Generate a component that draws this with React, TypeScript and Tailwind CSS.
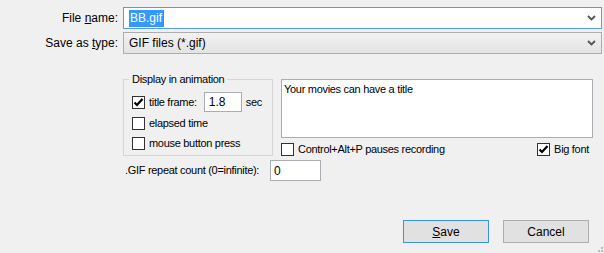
import React from 'react';

const Check = ({ checked }: { checked?: boolean }) => (
  <span className="w-[13px] h-[13px] border border-[#333333] bg-white flex items-center justify-center shrink-0">
    {checked && (
      <svg width="11" height="11" viewBox="0 0 11 11">
        <path d="M1.5 5.5 L4 8 L9.5 2" fill="none" stroke="#000" strokeWidth="2.2" />
      </svg>
    )}
  </span>
);

const Chevron = () => (
  <svg width="9" height="6" viewBox="0 0 9 6" className="shrink-0">
    <path d="M1 1 L4.5 4.5 L8 1" fill="none" stroke="#555555" strokeWidth="1.8" />
  </svg>
);

const App = () => {
  return (
    <div className="relative w-[604px] h-[253px] bg-[#f0f0f0] text-black flex flex-col font-['Liberation_Sans',Arial,sans-serif] overflow-hidden">
      <div className="flex items-center mt-[7px] h-[22px]">
        <label className="w-[118px] text-right text-[12px] mr-[5px]">
          File <span className="underline">n</span>ame:
        </label>
        <div className="w-[479px] h-[22px] border border-[#569de5] bg-white flex items-center pl-[5px] pr-[5px] text-[12px]">
          <span className="bg-[#3399ff] text-white h-[17px] leading-[17px] px-[1px]">BB.gif</span>
          <span className="w-[1px] h-[17px] bg-[#d46a00]" />
          <div className="flex-1" />
          <Chevron />
        </div>
      </div>

      <div className="flex items-center mt-[3px] h-[22px]">
        <label className="w-[118px] text-right text-[12px] mr-[5px]">
          Save as <span className="underline">t</span>ype:
        </label>
        <div className="w-[479px] h-[22px] border border-[#adadad] bg-gradient-to-b from-[#f2f2f2] to-[#e3e3e3] flex items-center pl-[5px] pr-[5px] text-[12px]">
          <span>GIF files (*.gif)</span>
          <div className="flex-1" />
          <Chevron />
        </div>
      </div>

      <div className="flex ml-[123px] mt-[19px] text-[11px] tracking-[-0.3px]">
        <fieldset className="w-[150px] h-[83px] border border-[#d5d5d5] pl-[5px]">
          <legend className="px-[3px] leading-[13px]">Display in animation</legend>
          <div className="pl-[3px]">
            <div className="flex items-center h-[20px] mt-[6px]">
              <Check checked />
              <span className="ml-[4px]">title frame:</span>
              <div className="ml-[7px] w-[38px] h-[20px] border border-[#abadb3] bg-white flex items-center pl-[4px] text-[12px] tracking-normal">
                1.8
              </div>
              <span className="ml-[4px]">sec</span>
            </div>
            <div className="flex items-center h-[19px] mt-[2px]">
              <Check />
              <span className="ml-[4px]">elapsed time</span>
            </div>
            <div className="flex items-center h-[20px]">
              <Check />
              <span className="ml-[4px]">mouse button press</span>
            </div>
          </div>
        </fieldset>

        <div className="ml-[8px] mt-[6px] w-[312px] flex flex-col">
          <textarea
            readOnly
            defaultValue="Your movies can have a title"
            className="h-[59px] w-full border border-[#abadb3] bg-white resize-none px-[2px] pt-[1px] text-[11px] tracking-[-0.3px] outline-none font-['Liberation_Sans',Arial,sans-serif]"
          />
          <div className="flex items-center justify-between h-[15px] mt-[4px] pr-[4px]">
            <div className="flex items-center">
              <Check />
              <span className="ml-[4px]">Control+Alt+P pauses recording</span>
            </div>
            <div className="flex items-center">
              <Check checked />
              <span className="ml-[4px]">Big font</span>
            </div>
          </div>
        </div>
      </div>

      <div className="flex items-center ml-[125px] mt-[3px] h-[21px] text-[11px] tracking-[-0.3px]">
        <span className="w-[145px]">.GIF repeat count (0=infinite):</span>
        <div className="w-[51px] h-[21px] border border-[#abadb3] bg-white flex items-center pl-[3px] text-[12px] tracking-normal">
          0
        </div>
      </div>

      <div className="mt-auto mb-[10px] flex justify-end pr-[15px] gap-[14px] text-[12px]">
        <button className="w-[86px] h-[23px] border border-[#3c93e6] bg-[#e1e1e1]">
          <span className="underline">S</span>ave
        </button>
        <button className="w-[86px] h-[23px] border border-[#adadad] bg-[#e1e1e1]">Cancel</button>
      </div>

      <div className="absolute right-[1px] bottom-[1px] grid grid-cols-3 gap-[1px]">
        <span className="w-[2px] h-[2px]" />
        <span className="w-[2px] h-[2px]" />
        <span className="w-[2px] h-[2px] bg-[#bcbcbc]" />
        <span className="w-[2px] h-[2px]" />
        <span className="w-[2px] h-[2px] bg-[#bcbcbc]" />
        <span className="w-[2px] h-[2px] bg-[#bcbcbc]" />
      </div>
    </div>
  );
};

export default App;
